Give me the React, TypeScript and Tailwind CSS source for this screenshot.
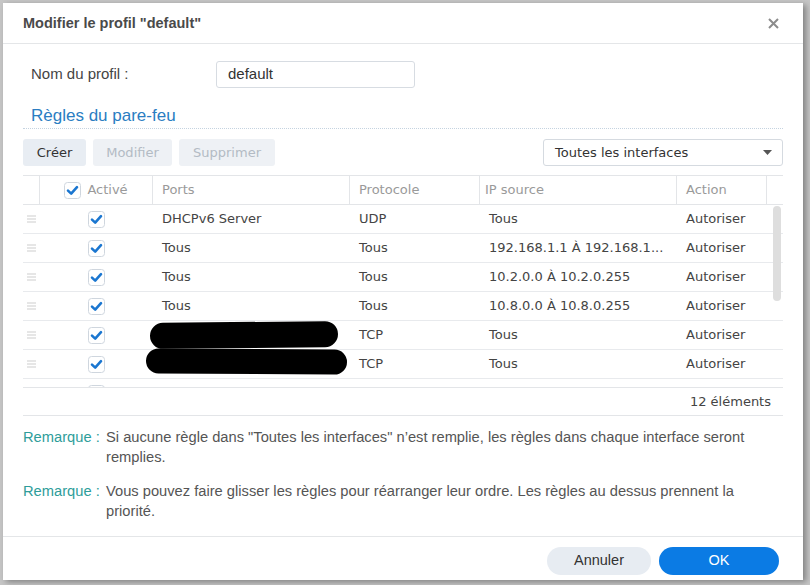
import React from "react";

const rows = [
  { port: "DHCPv6 Server", proto: "UDP", ip: "Tous", action: "Autoriser" },
  { port: "Tous", proto: "Tous", ip: "192.168.1.1 À 192.168.1...", action: "Autoriser" },
  { port: "Tous", proto: "Tous", ip: "10.2.0.0 À 10.2.0.255", action: "Autoriser" },
  { port: "Tous", proto: "Tous", ip: "10.8.0.0 À 10.8.0.255", action: "Autoriser" },
  { port: "", proto: "TCP", ip: "Tous", action: "Autoriser", blob: 1 },
  { port: "", proto: "TCP", ip: "Tous", action: "Autoriser", blob: 2 },
  { port: "", proto: "", ip: "", action: "", empty: true },
];

function Check() {
  return (
    <svg width="17" height="17" viewBox="0 0 17 17" className="shrink-0">
      <rect x="0.5" y="0.5" width="16" height="16" rx="3" fill="#fff" stroke="#cfd6de" />
      <path d="M4 8.6 L7.2 11.6 L13 5.2" fill="none" stroke="#1a76d0" strokeWidth="2.6" strokeLinecap="round" strokeLinejoin="round" />
    </svg>
  );
}

function Handle() {
  return (
    <svg width="9" height="8" viewBox="0 0 9 8">
      <path d="M0 1 H9 M0 4 H9 M0 7 H9" stroke="#cdcdcd" strokeWidth="1" />
    </svg>
  );
}

const cols = "grid grid-cols-[17px_113px_197px_130px_197px_90px_16px]";

export default function App() {
  return (
    <div className="w-[810px] h-[585px] overflow-hidden bg-[#c6c6c6] pt-[3px] pl-[3px]">
      <div className="w-[800px] h-[577px] bg-white flex flex-col shadow-[3px_2px_6px_rgba(0,0,0,0.35)]">
        {/* Header */}
        <div className="h-[41px] shrink-0 flex items-center justify-between pl-[20px] pr-[24px] pt-[1px] border-b border-[#e4e6e8]">
          <span className="font-['Liberation_Sans',sans-serif] font-bold text-[14.5px] text-[#4a4a4a]">
            Modifier le profil "default"
          </span>
          <svg width="11" height="11" viewBox="0 0 11 11">
            <path d="M1 1 L10 10 M10 1 L1 10" stroke="#8c8c8c" strokeWidth="2" />
          </svg>
        </div>

        {/* Body */}
        <div className="flex-1 px-[20px] flex flex-col">
          <div className="mt-[17px] flex items-center">
            <div className="w-[193px] pl-[8px] font-['Liberation_Sans',sans-serif] text-[15px] text-[#444]">Nom du profil :</div>
            <div className="w-[199px] h-[27px] border border-[#d7dce2] rounded-[3px] flex items-center pl-[11px] font-['Liberation_Sans',sans-serif] text-[15px] text-[#333]">
              default
            </div>
          </div>

          <div className="mt-[17px] pl-[8px] pb-[2px] border-b border-dotted border-[#c5d3e0] font-['Liberation_Sans',sans-serif] text-[17px] leading-[21px] text-[#2a7dc2]">
            Règles du pare-feu
          </div>

          {/* Toolbar */}
          <div className="mt-[10px] h-[27px] flex items-center justify-between font-['DejaVu_Sans',sans-serif] text-[13px]">
            <div className="flex gap-[7px]">
              <div className="w-[63px] h-[27px] rounded-[3px] bg-[#e8edf3] flex items-center justify-center text-[#333]">Créer</div>
              <div className="w-[79px] h-[27px] rounded-[3px] bg-[#eef1f5] flex items-center justify-center text-[#b3bbc4]">Modifier</div>
              <div className="w-[96px] h-[27px] rounded-[3px] bg-[#eef1f5] flex items-center justify-center text-[#b3bbc4]">Supprimer</div>
            </div>
            <div className="w-[240px] h-[27px] border border-[#d5dae0] rounded-[3px] flex items-center justify-between pl-[11px] pr-[10px] text-[#333]">
              <span>Toutes les interfaces</span>
              <svg width="9" height="5" viewBox="0 0 9 5">
                <path d="M0 0 H9 L4.5 5 Z" fill="#555" />
              </svg>
            </div>
          </div>

          {/* Table */}
          <div className="mt-[9px] font-['DejaVu_Sans',sans-serif] text-[13px]">
            <div className={`${cols} h-[30px] border-t border-b border-[#e3e5e8] text-[#9a9a9a]`}>
              <div className="border-r border-[#e3e5e8]" />
              <div className="border-r border-[#e3e5e8] flex items-center justify-center gap-[6px]">
                <Check />
                <span>Activé</span>
              </div>
              <div className="border-r border-[#e3e5e8] flex items-center pl-[9px]">Ports</div>
              <div className="border-r border-[#e3e5e8] flex items-center pl-[9px]">Protocole</div>
              <div className="border-r border-[#e3e5e8] flex items-center pl-[5px]">IP source</div>
              <div className="border-r border-[#e3e5e8] flex items-center pl-[9px]">Action</div>
              <div />
            </div>

            <div className="relative h-[183px] overflow-hidden border-b border-[#e3e5e8]">
              {rows.map((r, i) => (
                <div key={i} className={`${cols} h-[29px] border-b border-[#e8eaed] text-[#444]`}>
                  <div className="flex items-center justify-center">{!r.empty && <Handle />}</div>
                  <div className={`flex justify-center ${r.empty ? "items-start pt-[6px]" : "items-center"}`}>
                    <Check />
                  </div>
                  <div className="relative flex items-center pl-[9px]">
                    {r.port}
                    {r.blob === 1 && (
                      <div className="absolute left-[-3px] top-[1px] w-[188px] h-[26px] rounded-full bg-black -rotate-[0.6deg]" />
                    )}
                    {r.blob === 2 && (
                      <div className="absolute left-[-7px] top-[-1px] w-[201px] h-[25px] rounded-full bg-black rotate-[0.4deg]" />
                    )}
                  </div>
                  <div className="flex items-center pl-[9px]">{r.proto}</div>
                  <div className="flex items-center pl-[9px] whitespace-nowrap">{r.ip}</div>
                  <div className="flex items-center pl-[9px]">{r.action}</div>
                  <div />
                </div>
              ))}
              <div className="absolute right-[2px] top-[1px] w-[8px] h-[95px] rounded-full bg-[#dedede]" />
            </div>

            <div className="h-[28px] flex items-center justify-end pr-[12px] border-b border-[#e3e5e8] text-[#444]">
              12 éléments
            </div>
          </div>

          {/* Remarks */}
          <div className="pt-[11px] font-['Liberation_Sans',sans-serif] text-[14.7px] leading-[20px] text-[#555] flex flex-col gap-[14px]">
            <div className="flex">
              <div className="w-[83px] shrink-0 text-[#2e9d9a]">Remarque :</div>
              <div className="whitespace-nowrap">
                Si aucune règle dans "Toutes les interfaces" n’est remplie, les règles dans chaque interface seront
                <br />
                remplies.
              </div>
            </div>
            <div className="flex">
              <div className="w-[83px] shrink-0 text-[#2e9d9a]">Remarque :</div>
              <div className="whitespace-nowrap">
                Vous pouvez faire glisser les règles pour réarranger leur ordre. Les règles au dessus prennent la
                <br />
                priorité.
              </div>
            </div>
          </div>
        </div>

        {/* Footer */}
        <div className="h-[44px] shrink-0 border-t border-[#e4e6e8] flex justify-end gap-[8px] pr-[24px] pt-[10px] font-['Liberation_Sans',sans-serif] text-[14.5px]">
          <div className="w-[104px] h-[28px] rounded-full bg-[#e7ecf2] flex items-center justify-center text-[#333]">Annuler</div>
          <div className="w-[120px] h-[28px] rounded-full bg-[#0b7be4] flex items-center justify-center text-white">OK</div>
        </div>
      </div>
    </div>
  );
}
